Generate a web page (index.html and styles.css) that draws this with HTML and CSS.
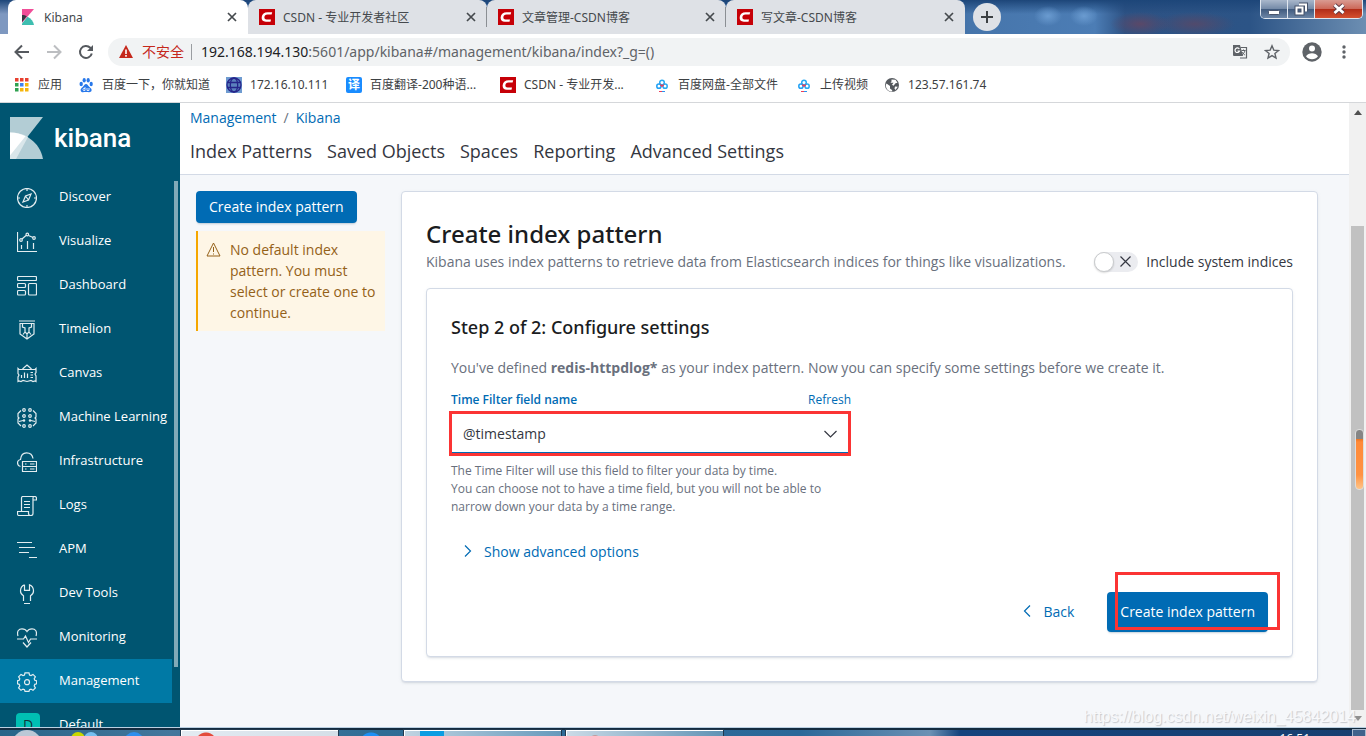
FILE: index.html
```html
<!DOCTYPE html>
<html lang="zh-CN">
<head>
<meta charset="utf-8">
<title>Kibana</title>
<link rel="stylesheet" href="styles.css">
</head>
<body>
<svg class="defs" aria-hidden="true">
  <symbol id="csdn" viewBox="0 0 16 16"><rect width="16" height="16" fill="#c60007"/><path d="M13.200 3.300 12.600 5.500H8.500C6.500 5.500 5.600 6.700 5.400 8.100 5.200 9.600 6 10.500 7.500 10.500H12L11.500 12.700H6.800C3.800 12.700 2.300 11 2.700 8.100 3.100 5 5.300 3.300 8.600 3.300Z" fill="#fff"/></symbol>
  <symbol id="close" viewBox="0 0 10 10"><path d="M1 1l8 8M9 1L1 9" stroke="#45494d" stroke-width="1.700" fill="none"/></symbol>
  <symbol id="pan" viewBox="0 0 16 16"><g fill="none" stroke-width="1.500"><circle cx="8" cy="5.500" r="2.300" stroke="#27a9f3"/><circle cx="4.900" cy="9.200" r="2.100" stroke="#1ea0f5"/><circle cx="11.100" cy="9.200" r="2.100" stroke="#27a9f3"/><path d="M6.300 7.500 8 9.200l1.700-1.700" stroke="#ed3c58"/></g><path d="M5 14.500h3" stroke="#ed3c58"/><path d="M8 14.500h3" stroke="#2793f3"/></symbol>
</svg>

<header class="browser">
  <div class="tabstrip">
    <div class="tab tab-active">
      <svg class="fav" viewBox="0 0 16 16"><path d="M2 0h12L2 14z" fill="#f04e98"/><path d="M2 6c2 0 3.500.5 4.800 1.300L2 13z" fill="#343741"/><path d="M7.500 7.700C11 9.500 13.500 12.500 14 16H2v-1.500z" fill="#3ebeb0"/></svg>
      <span class="tab-title">Kibana</span>
      <button class="icon-btn" aria-label="Close tab"><svg width="10" height="10"><use href="#close"/></svg></button>
    </div>
    <div class="tab">
      <svg class="fav"><use href="#csdn"/></svg><span class="tab-title">CSDN - 专业开发者社区</span>
      <button class="icon-btn" aria-label="Close tab"><svg width="10" height="10"><use href="#close"/></svg></button>
    </div>
    <div class="tab">
      <svg class="fav"><use href="#csdn"/></svg><span class="tab-title">文章管理-CSDN博客</span>
      <button class="icon-btn" aria-label="Close tab"><svg width="10" height="10"><use href="#close"/></svg></button>
    </div>
    <div class="tab tab-last">
      <svg class="fav"><use href="#csdn"/></svg><span class="tab-title">写文章-CSDN博客</span>
      <button class="icon-btn" aria-label="Close tab"><svg width="10" height="10"><use href="#close"/></svg></button>
    </div>
    <button class="new-tab" aria-label="New tab"><svg width="12" height="12" viewBox="0 0 12 12"><path d="M6 0v12M0 6h12" stroke="#3c4043" stroke-width="2"/></svg></button>
    <div class="win-controls">
      <button class="win-btn" aria-label="Minimize"><svg width="12" height="14" viewBox="0 0 12 14"><rect x=".5" y="8.500" width="11" height="4" rx="1" fill="#fff" stroke="#4a566e"/></svg></button>
      <button class="win-btn" aria-label="Restore"><svg width="14" height="14" viewBox="0 0 14 14"><g fill="none"><path d="M5 2.500h7v7M2.500 5.500h6v6h-6z" stroke="#46536b" stroke-width="4"/><path d="M5 2.500h7v7M2.500 5.500h6v6h-6z" stroke="#fff" stroke-width="2"/></g></svg></button>
      <button class="win-btn win-close" aria-label="Close"><svg width="14" height="12" viewBox="0 0 14 12"><path d="M2.500 2l9 8M11.500 2l-9 8" stroke="#5a3b47" stroke-width="4.500"/><path d="M2.500 2l9 8M11.500 2l-9 8" stroke="#fff" stroke-width="2.800"/></svg></button>
    </div>
  </div>

  <div class="toolbar">
    <button class="tool" aria-label="Back"><svg width="16" height="16" viewBox="0 0 16 16"><path d="M15 8H2M8 1.500 1.500 8 8 14.500" fill="none" stroke="#55595e" stroke-width="2"/></svg></button>
    <button class="tool" aria-label="Forward"><svg width="16" height="16" viewBox="0 0 16 16"><path d="M1 8h13M8 1.500 14.500 8 8 14.500" fill="none" stroke="#bcbec1" stroke-width="2"/></svg></button>
    <button class="tool" aria-label="Reload"><svg width="16" height="16" viewBox="0 0 16 16"><path d="M13.800 9.500A6 6 0 1 1 12.300 3.800L14 5.500" fill="none" stroke="#55595e" stroke-width="2"/><path d="M15 1v6H9z" fill="#55595e"/></svg></button>
    <div class="omnibox">
      <svg width="14" height="14" viewBox="0 0 14 14"><path d="M7 0l7 13H0z" fill="#c5281c"/><path d="M7 4.500v4.500M7 10v1.700" stroke="#fff" stroke-width="1.600"/></svg>
      <span class="unsafe">不安全</span>
      <span class="url"><b>192.168.194.130</b>:5601/app/kibana#/management/kibana/index?_g=()</span>
      <button class="omni-btn" aria-label="Translate"><svg width="16" height="16" viewBox="0 0 16 16"><path d="M1 1h7l3 11H2q-1 0-1-1z" fill="#5f6368"/><path d="M8.500 3.500h6v10.500H8" fill="none" stroke="#5f6368" stroke-width="1.200"/><path d="M7.300 5A2.300 2.300 0 1 0 7.500 7H5.500" fill="none" stroke="#fff" stroke-width="1.200"/><path d="M9.500 6.500h4M11.500 5.500v1M13 6.500c-.5 2-1.800 3.500-3 4.500M10 8c.8 1.500 2 2.500 3 3" fill="none" stroke="#5f6368"/></svg></button>
      <button class="omni-btn" aria-label="Bookmark"><svg width="16" height="16" viewBox="0 0 16 16"><path d="M8 1.800l1.800 4.300 4.700.4-3.600 3 1.100 4.600L8 11.600l-4 2.500 1.100-4.600-3.600-3 4.700-.4z" fill="none" stroke="#5f6368" stroke-width="1.400"/></svg></button>
    </div>
    <button class="tool" aria-label="Profile"><svg width="20" height="20" viewBox="0 0 20 20"><circle cx="10" cy="10" r="9.700" fill="#5f6368"/><circle cx="10" cy="6.500" r="3" fill="#fff"/><path d="M4 14.200c1.200-2 3.500-3 6-3s4.800 1 6 3a7.300 7.300 0 0 1-12 0z" fill="#fff"/></svg></button>
    <button class="tool" aria-label="Menu"><svg width="4" height="14" viewBox="0 0 4 14"><g fill="#5f6368"><circle cx="2" cy="2" r="1.700"/><circle cx="2" cy="7" r="1.700"/><circle cx="2" cy="12" r="1.700"/></g></svg></button>
  </div>

  <nav class="bookmarks">
    <a href="#"><svg viewBox="0 0 16 16"><g fill="#e8402f"><path d="M1 1h3.500v3.500H1zM6 1h3.500v3.500H6zM11 1h3.500v3.500H11z"/></g><path d="M1 6h3.500v3.500H1zM1 11h3.500v3.500H1z" fill="#2fa150"/><path d="M6 6h3.500v3.500H6z" fill="#3f83f1"/><path d="M11 6h3.500v3.500H11zM6 11h3.500v3.500H6zM11 11h3.500v3.500H11z" fill="#f6b50b"/></svg><span>应用</span></a>
    <a href="#"><svg viewBox="0 0 16 16"><g fill="#2878ea"><ellipse cx="3.200" cy="7" rx="1.700" ry="2.200"/><ellipse cx="6.200" cy="3.300" rx="1.600" ry="2.200"/><ellipse cx="10.200" cy="3.300" rx="1.600" ry="2.200"/><ellipse cx="13.200" cy="7" rx="1.600" ry="2.200"/><path d="M8 7c1.500 0 2 1.500 3.500 3s2.500 2 2 3.800c-.6 2-3 1.200-5.500 1.200s-4.500.8-5.200-1C2 12 3.500 11 4.700 10 6 8.800 6.500 7 8 7z"/></g><path d="M7 10v3.500H5.500q-1-1.200 0-2H7M9 11v2.500h2V11" stroke="#fff" fill="none" stroke-width=".8"/></svg><span>百度一下，你就知道</span></a>
    <a href="#"><svg viewBox="0 0 16 16"><rect width="16" height="16" fill="#6f9bd0"/><circle cx="8" cy="8" r="7" fill="#5b82bd"/><g fill="none" stroke="#26258b" stroke-width="1.300"><circle cx="8" cy="8" r="7"/><ellipse cx="8" cy="8" rx="3.700" ry="7"/><path d="M1.500 5.500h13M1.500 10.500h13"/></g></svg><span class="ip">172.16.10.111</span></a>
    <a href="#"><i class="yi">译</i><span class="cut">百度翻译-200种语...</span></a>
    <a href="#"><svg><use href="#csdn"/></svg><span class="cut">CSDN - 专业开发...</span></a>
    <a href="#"><svg><use href="#pan"/></svg><span class="files">百度网盘-全部文件</span></a>
    <a href="#"><svg><use href="#pan"/></svg><span>上传视频</span></a>
    <a href="#"><svg viewBox="0 0 16 16"><circle cx="8" cy="8" r="7" fill="#55595e"/><path d="M2.500 6.500 6 9v2.500l2 1.500.5 1.500C5 15 1.700 12 1.800 8zM7.500 2.500l4 .3 2 3-2 .5-2 2.500-1.500-1 1.500-2h-3l1-1.300zM11 9.500l2.800.3-2.300 3.200-1-1.500z" fill="#fff"/></svg><span class="ip">123.57.161.74</span></a>
  </nav>
</header>

<div class="viewport">
  <aside class="sidebar">
    <a class="logo" href="#">
      <svg width="34" height="42" viewBox="0 0 34 42"><path d="M0 0h33L0 42z" fill="#b3cdd5"/><path d="M0 15.500C15 15.500 30 25 33 42H0z" fill="#b3cdd5"/><path d="M0 15.500c7.500 0 13 1.700 18 4.500L6 42H0z" fill="#d9e6ea"/><path d="M0 15.500c6 0 11 1.500 15.500 3.700L0 38.500z" fill="#fff"/></svg>
      <span>kibana</span>
    </a>
    <nav class="nav">
      <a href="#"><svg viewBox="0 0 20 20"><circle cx="10" cy="10" r="9.500"/><path d="M14 6l-2.500 6L6 14l2.500-6zM8.500 8l3 4M10 .5V3M10 17v2.500M.5 10H3M17 10h2.500"/></svg>Discover</a>
      <a href="#"><svg viewBox="0 0 20 20"><path d="M.5 0v19.500H20M4.500 17v-4M10.500 17V9M16.500 17v-6M5 7l4-3.500M11.500 3.500 16 5.500"/><circle cx="4" cy="8" r="1.300"/><circle cx="10.300" cy="2.500" r="1.300"/><circle cx="17" cy="6" r="1.300"/></svg>Visualize</a>
      <a href="#"><svg viewBox="0 0 20 20"><rect x=".5" y=".5" width="19" height="4" rx="1"/><rect x=".5" y="7.500" width="8" height="4" rx="1"/><rect x=".5" y="14.500" width="8" height="4.500" rx="1"/><rect x="11.500" y="7.500" width="8" height="11.500" rx="1"/></svg>Dashboard</a>
      <a href="#"><svg viewBox="0 0 20 20"><path d="M2 1h16M3 3.500h14V14l-7 5-7-5zM5.500 4v3l2.500 1v4l2 2 2-2V8l2.500-1V4M8 12l-2 2.500M12 12l2 2.500M10 14v4"/></svg>Timelion</a>
      <a href="#"><svg viewBox="0 0 20 20"><path d="M1 4.500l1 1h16l1-1v4l-1 1.500 1 2v5.500l-1-.5-2 .5-2-1-4 1-4-1-2 1-2-.500-1 .5V13l1-2-1-1.500zM5.500 5 10 1l4.500 4M4.500 14v-3M7.500 14V8.500M10.500 14V9.500M13.500 8.500H16M13.500 11H16M13.500 13.500H16"/></svg>Canvas</a>
      <a href="#"><svg viewBox="0 0 20 20"><path d="M4 2.500 1 5.500V9l1 1-1 1v4l3 3M16 2.500l3 3V9l-1 1 1 1v4l-3 3M2 13.500l4-1M18 13.500l-4-1"/><circle cx="7" cy="2" r="1.300"/><circle cx="13" cy="2" r="1.300"/><circle cx="7" cy="8" r="1.300"/><circle cx="13" cy="8" r="1.300"/><circle cx="7" cy="12.500" r=".7"/><circle cx="13" cy="12.500" r=".7"/><circle cx="7" cy="18" r="1.300"/><circle cx="13" cy="18" r="1.300"/></svg>Machine Learning</a>
      <a href="#"><svg viewBox="0 0 20 20"><path d="M3.500 14.500C-.5 13.500-.5 8 3.500 7.500 4 2.500 7 .8 9.500.8 13 .8 15.500 3 16 6.500M5.500 9.500h14v10h-14zM5.500 14.500h14M8 12h1.500M8 17h1.500M13 12h4.500M13 17h4.500"/></svg>Infrastructure</a>
      <a href="#"><svg viewBox="0 0 20 20"><path d="M4.500 15.500V2Q4.500.5 6 .5h11.500q2 0 2 2v1.500H16V17.500q0 2-2 2H2q-1.500 0-1.500-2v-2h11v2q0 2 2 2M16 4V2q0-1.500 1.500-1.500M7 5.500h6M7 8.500h6M7 11.500h6"/></svg>Logs</a>
      <a href="#"><svg viewBox="0 0 20 20"><path d="M0 2.500h15M2 7.500h16M2 12.500h10M12 17.500h8"/></svg>APM</a>
      <a href="#"><svg viewBox="0 0 20 20"><path d="M7.500.8v5.500H12.500V.8C15.500 2 16.500 4.500 16.500 7c0 2-1.500 4-3 4.800V17M7.500.8C4.500 2 3.500 4.500 3.500 7c0 2 1.500 4 3 4.800V17M7 19.500h6"/></svg>Dev Tools</a>
      <a href="#"><svg viewBox="0 0 20 20"><path d="M1 8C-.5 3 2 .8 5 .8c2.500 0 4 1 5 2.700C11 1.800 12.500.8 15 .8c3 0 5.500 2.200 4 7.200M0 11h6.500l2-3 3 6.500L13.500 11H20M6 14.500l4 4.500 4-4.500"/></svg>Monitoring</a>
      <a class="current" href="#"><svg viewBox="0 0 20 20"><path d="M8 .8h4l.5 2.200 1.500.6 2-1.200 2.400 2.400-1.200 2 .6 1.500 1.800.5v3l-1.800.5-.6 1.600 1.200 2-2.400 2.400-2-1.200-1.500.6-.5 1.700H8l-.5-1.700-1.500-.6-2 1.200L1.600 15.900l1.200-2-.6-1.600L.5 11.800v-3l1.700-.5.6-1.500-1.200-2L4 2.400l2 1.200L7.500 3z"/><circle cx="10" cy="10.200" r="2.500"/></svg>Management</a>
      <a href="#"><i class="space">D</i>Default</a>
    </nav>
    <div class="side-thumb"></div>
  </aside>

  <main class="main">
    <div class="local-nav">
      <div class="crumbs"><a href="#">Management</a><span>/</span><a href="#">Kibana</a></div>
      <nav class="sections"><a href="#">Index Patterns</a><a href="#">Saved Objects</a><a href="#">Spaces</a><a href="#">Reporting</a><a href="#">Advanced Settings</a></nav>
    </div>
    <div class="content">
      <div class="left">
        <button class="btn btn-small">Create index pattern</button>
        <div class="callout">
          <svg width="15" height="15" viewBox="0 0 15 15"><path d="M7.500 1 14 14H1zM7.500 5v5M7.500 11.500v1" fill="none" stroke="#946118"/></svg>
          <p>No default index pattern. You must select or create one to continue.</p>
        </div>
      </div>
      <section class="panel outer">
        <h1>Create index pattern</h1>
        <div class="intro">
          <p>Kibana uses index patterns to retrieve data from Elasticsearch indices for things like visualizations.</p>
          <label class="switch"><input type="checkbox" role="switch"><span class="track"><span class="knob"></span><svg width="11" height="11" viewBox="0 0 11 11"><path d="M.5.5l10 10M10.500.5l-10 10" stroke="#343741" stroke-width="1.200"/></svg></span>Include system indices</label>
        </div>
        <div class="panel inner">
          <h2>Step 2 of 2: Configure settings</h2>
          <p class="desc">You've defined <strong>redis-httpdlog*</strong> as your index pattern. Now you can specify some settings before we create it.</p>
          <div class="field">
            <div class="field-head"><label for="time-field">Time Filter field name</label><a href="#">Refresh</a></div>
            <div class="select-wrap">
              <select id="time-field"><option>@timestamp</option></select>
              <svg class="chev" width="13" height="8" viewBox="0 0 13 8"><path d="M.5 1l6 6 6-6" fill="none" stroke="#343741" stroke-width="1.200"/></svg>
              <div class="mark mark-select"></div>
            </div>
            <p class="help">The Time Filter will use this field to filter your data by time.<br>You can choose not to have a time field, but you will not be able to narrow down your data by a time range.</p>
          </div>
          <button class="link-btn advanced"><svg width="8" height="12" viewBox="0 0 8 12"><path d="M1 .5 6.500 6 1 11.500" fill="none" stroke="#006bb4" stroke-width="1.200"/></svg>Show advanced options</button>
          <div class="actions">
            <button class="link-btn"><svg width="8" height="12" viewBox="0 0 8 12"><path d="M7 .5 1.500 6 7 11.500" fill="none" stroke="#006bb4" stroke-width="1.200"/></svg>Back</button>
            <div class="create"><button class="btn btn-large">Create index pattern</button><div class="mark mark-create"></div></div>
          </div>
        </div>
      </section>
    </div>
  </main>

  <div class="scrollbar"><i class="arrow up"></i><div class="thumb"></div><i class="arrow down"></i><div class="gadget"></div></div>
  <div class="watermark">https://blog.csdn.net/weixin_45842014</div>
</div>

<footer class="taskbar">
  <div class="quick"><i class="orb"></i><i class="dots"></i><i class="ball"></i></div>
  <div class="task task-a"></div>
  <div class="pin"></div>
  <div class="task task-b"></div>
  <div class="task task-c"></div>
  <time>16:51</time>
  <div class="peek"></div>
</footer>
</body>
</html>
```
FILE: styles.css
```css
* { box-sizing: border-box; }
body {
  margin: 0; height: 100vh; display: flex; flex-direction: column; overflow: hidden;
  font: 14px/21px "Open Sans", "Noto Sans", "Noto Sans CJK SC", sans-serif;
  color: #343741; background: #fff;
}
h1, h2, p { margin: 0; font-weight: 400; }
a { text-decoration: none; color: #006bb4; }
button { font: inherit; color: inherit; border: 0; padding: 0; background: none; display: flex; align-items: center; justify-content: center; }
i { font-style: normal; }
svg { flex: none; display: block; }
.defs { position: absolute; width: 0; height: 0; }

/* Browser window */
.browser { font: 12px/16px "Noto Sans", "Noto Sans CJK SC", sans-serif; flex: none; }
.tabstrip {
  display: flex; height: 34px; padding-left: 8px;
  background:
    radial-gradient(ellipse 30px 12px at 1140px 24px, #5a4868, transparent),
    radial-gradient(ellipse 40px 12px at 1195px 24px, #514a6c, transparent),
    radial-gradient(ellipse 14px 10px at 1048px 16px, #6a9bd0, transparent),
    radial-gradient(ellipse 14px 10px at 1084px 16px, #6a9bd0, transparent),
    linear-gradient(180deg, #1d4679 0, transparent 14px),
    linear-gradient(90deg, #7e98c0 0, #7e98c0 12px, #205493 240px, #205493 900px, #4675ab 970px, #4c7db5 1095px, #2d5284 1125px, #2c5486 1250px, #6c8eb2 1366px);
}
.tab { flex: 0 1 239px; display: flex; align-items: center; gap: 8px; padding: 0 11px; background: #dee1e6; border-radius: 8px 8px 0 0; position: relative; color: #45494d; }
.tab:not(.tab-active):not(.tab-last)::after { content: ""; position: absolute; right: 0; top: 7px; width: 1px; height: 20px; background: #8b8f94; }
.tab-active { flex-basis: 240px; padding-left: 12px; background: #fff; }
.fav { width: 16px; height: 16px; }
.tab-title { flex: 1; white-space: nowrap; overflow: hidden; padding-top: 2px; }
.icon-btn { width: 10px; height: 16px; }
.new-tab { width: 28px; height: 28px; margin: 3px 0 0 8px; border-radius: 50%; background: #dee1e6; }
.win-controls { display: flex; height: 19px; margin: 0 3px 0 auto; border: 1px solid #e0e6ef; border-top: 0; border-radius: 0 0 5px 5px; overflow: hidden; }
.win-btn { width: 27px; background: linear-gradient(#a9b7cb, #7389a7 9px, #3f597d 9px, #6d86a6); border-right: 1px solid #e0e6ef; }
.win-close { width: 47px; border: 0; background: linear-gradient(#d99b92, #cc6757 9px, #b02c18 9px, #d5502f); }
.toolbar { display: flex; align-items: center; height: 36px; padding: 0 11px 0 6px; }
.tool { width: 32px; height: 28px; }
.omnibox { flex: 1; display: flex; align-items: center; height: 28px; margin: 0 6px 0 6px; padding: 0 10px 0 11px; background: #f1f3f4; border-radius: 14px; font-size: 14px; line-height: 20px; }
.unsafe { margin-left: 9px; padding-right: 7px; border-right: 1px solid #9a9da1; color: #c5281c; line-height: 16px; }
.url { flex: 1; margin-left: 9px; color: #5f6368; }
.url b { font-weight: 400; color: #202124; }
.omni-btn { width: 16px; height: 20px; }
.omni-btn + .omni-btn { margin-left: 16px; }
.toolbar .tool:last-child { margin-right: -5px; }
.bookmarks { display: flex; align-items: center; gap: 16px; height: 33px; padding: 0 14px 3px; border-bottom: 1px solid #d5d7da; }
.bookmarks a { display: flex; align-items: center; gap: 8px; color: #3c4043; white-space: nowrap; }
.bookmarks svg, .yi { width: 16px; height: 16px; }
.bookmarks span { padding-top: 1px; }
.yi { border-radius: 2px; background: #1a8cff; color: #fff; font-weight: 700; text-align: center; }
.ip { min-width: 80px; }
.files { min-width: 102px; }
.cut { width: 114px; }

/* Page */
.viewport { flex: 1; min-height: 0; display: flex; position: relative; overflow: hidden; }
.sidebar { width: 180px; flex: none; background: #005571; position: relative; overflow: hidden; color: #fff; }
.logo { display: flex; align-items: center; gap: 10px; height: 72px; padding: 0 0 2px 10px; color: #fff; font: 500 26px/32px Roboto, sans-serif; }
.nav { width: 172px; }
.nav a { display: flex; align-items: center; gap: 22px; height: 44px; padding: 0 0 2px 17px; color: #fff; font-size: 13px; line-height: 20px; white-space: nowrap; }
.nav svg { width: 20px; height: 20px; margin-top: 3px; fill: none; stroke: #e3edf0; stroke-width: 1.2; }
.nav .current { background: #0079a5; }
.space { width: 24px; height: 24px; margin: 2px -3px 0 -1px; border-radius: 4px; background: #00bfb3; color: #12343a; text-align: center; font-size: 14px; line-height: 24px; }
.side-thumb { position: absolute; right: 2px; top: 78px; bottom: 60px; width: 4px; background: #80aab8; }
.main { flex: 1; min-width: 0; background: #f5f7fa; }
.local-nav { height: 72px; padding: 5px 10px 0; background: #fff; border-bottom: 1px solid #d3dae6; }
.crumbs { display: flex; gap: 7px; line-height: 20px; }
.crumbs span { color: #69707d; }
.sections { display: flex; gap: 15px; margin-top: 11px; font-size: 18px; line-height: 24px; }
.sections a { color: #343741; }
.content { display: flex; align-items: flex-start; gap: 16px; padding: 16px 31px 0 16px; }
.left { width: 189px; flex: none; }
.btn { border-radius: 4px; background: #006bb4; color: #fff; padding: 0 13px 2px; white-space: nowrap; box-shadow: 0 2px 2px -1px rgba(54, 97, 126, .3); }
.btn-small { height: 32px; }
.btn-large { height: 40px; }
.callout { display: flex; gap: 9px; margin-top: 8px; padding: 8px; border-left: 2px solid #f5a700; background: #fef6e6; color: #946118; }
.callout svg { margin-top: 3px; }
.panel { background: #fff; border: 1px solid #d3dae6; border-radius: 4px; box-shadow: 0 2px 2px -1px rgba(152, 162, 179, .3), 0 1px 5px -2px rgba(152, 162, 179, .3); padding: 24px; }
.outer { flex: 1; min-width: 0; }
h1, h2 { font-family: "Noto Sans", "Open Sans", sans-serif; font-weight: 500; color: #1a1c21; }
h1 { font-size: 24px; line-height: 35px; }
h2 { font-size: 18px; line-height: 28px; }
.intro { display: flex; align-items: center; justify-content: space-between; color: #69707d; white-space: nowrap; }
.switch { display: flex; align-items: center; gap: 8px; color: #343741; }
.switch input { position: absolute; opacity: 0; }
.track { display: flex; align-items: center; width: 44px; height: 20px; border-radius: 10px; background: #ebecf0; gap: 6px; }
.knob { width: 20px; height: 20px; border-radius: 50%; background: #fff; border: 1px solid #c9cbcd; box-shadow: 0 1px 2px rgba(0, 0, 0, .15); }
.inner { margin-top: 16px; }
.desc { margin-top: 16px; color: #69707d; }
.desc strong { font-weight: 700; }
.field { width: 400px; max-width: 100%; margin-top: 13px; font-size: 12px; line-height: 18px; }
.field-head { display: flex; justify-content: space-between; }
.field-head label { color: #006bb4; font-weight: 600; }
.select-wrap { position: relative; margin-top: 4px; }
select { appearance: none; display: block; width: 100%; height: 41px; padding: 1px 11px 0; border: 1px solid #e4e8ee; border-bottom: 2px solid #006bb4; border-radius: 0; background: #fff; color: #343741; font: 14px/20px "Open Sans", sans-serif; }
.chev { position: absolute; right: 14px; top: 17px; pointer-events: none; }
.mark { position: absolute; border: 3px solid #fb3434; pointer-events: none; }
.mark-select { inset: -2px 0 -2px -2px; }
.help { margin-top: 8px; color: #69707d; }
.link-btn { color: #006bb4; gap: 12px; padding-bottom: 2px; }
.advanced { margin: 25px 0 0 13px; height: 22px; }
.actions { display: flex; justify-content: flex-end; align-items: center; gap: 33px; margin-top: 29px; }
.create { position: relative; }
.mark-create { left: 8px; top: -20px; right: -12px; bottom: 2px; }

.scrollbar { width: 17px; flex: none; background: #f1f1f1; display: flex; flex-direction: column; align-items: center; position: relative; }
.thumb { width: 13px; flex: 1; margin: 107px 0 0; background: #c1c1c1; }
.arrow { border: 4px solid transparent; }
.up { border-bottom: 5px solid #505050; border-top: 0; margin-top: 7px; margin-bottom: 4px; }
.down { border-top: 5px solid #909090; border-bottom: 0; margin: 6px 0; }
.gadget { position: absolute; right: 2px; top: 326px; width: 9px; height: 61px; border: 1px solid #ddd; border-radius: 4px; background: linear-gradient(#858585 9px, #ec7420 9px, #ff8a38 12px, #ff9344 45px, #ffc488); }
.watermark { position: absolute; right: 10px; bottom: 0; font: 16px/20px "Liberation Sans", sans-serif; color: #f8f9fb; text-shadow: 1px 1px 1px #c4c7cc; }

/* Taskbar */
.taskbar { flex: none; display: flex; height: 9px; overflow: hidden; border-top: 1px solid #bad0e2; box-shadow: inset 0 2px #142c40; background: linear-gradient(90deg, #286589 0, #43779c 170px, #2f6d95 380px, #2b6899 800px, #6b91b4 930px, #15437d 960px, #173f70 1366px); color: #fff; padding-top: 1px; }
.quick { width: 180px; display: flex; align-items: flex-start; padding-left: 12px; }
.orb { width: 30px; height: 30px; border-radius: 50%; background: #bac8d6; margin-top: 1px; }
.dots { width: 14px; height: 14px; margin: 3px 0 0 29px; border-radius: 50%; background: #c9d800; box-shadow: 13px 0 #75bff0; }
.ball { width: 20px; height: 20px; margin: 3px 0 0 39px; border-radius: 50%; background: #2e8fee; }
.task { height: 20px; border: 1px solid #20384d; box-shadow: inset 1px 1px #fff; }
.task-a { width: 159px; background: radial-gradient(circle 11px at 25px 13px, #e34b3b 10px, transparent 11px), linear-gradient(90deg, #e3ebf2, #d5dfe8); }
.task-b { width: 159px; background: linear-gradient(90deg, transparent 16px, #0b9de2 16px, #0b9de2 40px, transparent 40px), linear-gradient(90deg, #c0d4e2, #669abc); }
.task-c { width: 159px; margin-left: 3px; background: radial-gradient(circle 10px at 29px 15px, #ca6b5e 9px, transparent 10px), linear-gradient(90deg, #cbdbe7, #6093b5); }
.pin { width: 64px; height: 20px; background: radial-gradient(circle 12px at 32px 15px, #1e90f5 11px, transparent 12px); }
time { margin-left: auto; margin-right: 42px; font-size: 12px; line-height: 20px; }
.peek { width: 14px; height: 10px; border: 1px solid #a9bbcf; background: #40638c; }
```
